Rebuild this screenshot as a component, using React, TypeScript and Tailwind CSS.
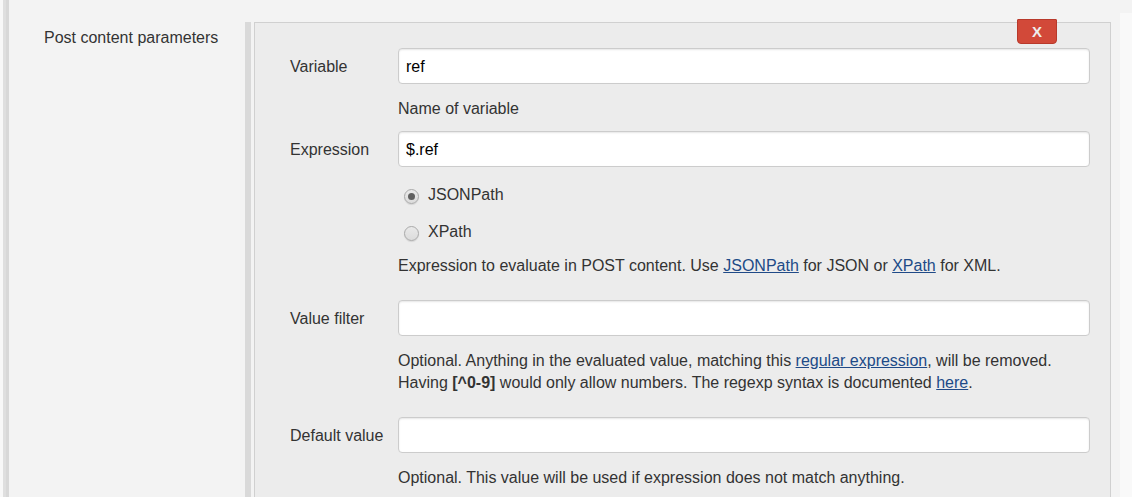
import { useState, type ReactNode } from "react";

const link = "text-[#204a87] underline";

function TextField({
  id,
  label,
  initial = "",
  children,
}: {
  id: string;
  label: string;
  initial?: string;
  children: ReactNode;
}) {
  const [value, setValue] = useState(initial);
  return (
    <div className="flex">
      <label htmlFor={id} className="w-[108px] shrink-0 pt-2">
        {label}
      </label>
      <div className="min-w-0 flex-1">
        <input
          id={id}
          type="text"
          value={value}
          onChange={(e) => setValue(e.target.value)}
          className="block h-9 w-full rounded border border-[#cccccc] bg-white px-[7px] pt-0.5 text-black shadow-[inset_0_1px_2px_rgba(0,0,0,0.1)] outline-none focus:border-[#204a87]"
        />
        {children}
      </div>
    </div>
  );
}

function Radio({
  label,
  checked,
  onSelect,
}: {
  label: string;
  checked: boolean;
  onSelect: () => void;
}) {
  return (
    <label className="flex w-fit items-start gap-[9px]">
      <input
        type="radio"
        name="expression-type"
        checked={checked}
        onChange={onSelect}
        className="mt-[5px] grid size-[15px] appearance-none place-items-center rounded-full border border-[#a9a9a9] bg-linear-to-b from-[#e9e9e9] to-[#dcdcdc] shadow-[0_1px_1px_rgba(0,0,0,0.1)] before:size-[7px] before:rounded-full checked:before:bg-[#606060] checked:before:content-['']"
      />
      {label}
    </label>
  );
}

export default function App() {
  const [kind, setKind] = useState("JSONPath");
  return (
    <div className="flex min-h-screen bg-[#f3f3f3] font-['Liberation_Sans',Arial,sans-serif] text-[16px] leading-[22px] text-[#333333]">
      <div className="w-[3px] shrink-0 bg-[#f8f8f8]" />
      <div className="w-1.5 shrink-0 border-r-[3px] border-[#d8d8d8] bg-[#dfdfdf]" />
      <div className="w-[236px] shrink-0 pt-[27px] pl-[35px]">Post content parameters</div>
      <div className="mt-[22px] mr-[3px] w-1.5 shrink-0 bg-[#d9d9d9]" />
      <section
        aria-label="Post content parameter"
        className="relative mt-[22px] mr-[9px] min-w-0 flex-1 border border-b-0 border-[#d0d0d0] bg-[#ececec] pt-[25px] pr-5 pb-2 pl-[35px]"
      >
        <button
          type="button"
          aria-label="X"
          className="absolute -top-1 right-[53px] flex h-[25px] w-10 items-center justify-center rounded-t-[1px] rounded-b border border-[#b8392b] bg-[#d24939] text-[15px] font-bold text-[#eeeeee]"
        >
          X
        </button>
        <TextField id="variable" label="Variable" initial="ref">
          <p className="mt-3.5 mb-[11px]">Name of variable</p>
        </TextField>
        <TextField id="expression" label="Expression" initial="$.ref">
          <div className="mt-[17px] mb-3 flex flex-col gap-[15px] pl-1.5">
            <Radio label="JSONPath" checked={kind === "JSONPath"} onSelect={() => setKind("JSONPath")} />
            <Radio label="XPath" checked={kind === "XPath"} onSelect={() => setKind("XPath")} />
          </div>
          <p className="mb-[23px]">
            Expression to evaluate in POST content. Use{" "}
            <a href="#jsonpath" className={link}>JSONPath</a> for JSON or{" "}
            <a href="#xpath" className={link}>XPath</a> for XML.
          </p>
        </TextField>
        <TextField id="filter" label="Value filter">
          <p className="mt-3.5 mb-[23px]">
            Optional. Anything in the evaluated value, matching this{" "}
            <a href="#regular-expression" className={link}>regular expression</a>, will be removed.
            <br />
            Having <b>[^0-9]</b> would only allow numbers. The regexp syntax is documented{" "}
            <a href="#syntax" className={link}>here</a>.
          </p>
        </TextField>
        <TextField id="default" label="Default value">
          <p className="mt-3.5">
            Optional. This value will be used if expression does not match anything.
          </p>
        </TextField>
      </section>
      <div className="mt-[13px] w-3 shrink-0 bg-[#f9f9f9]" />
    </div>
  );
}
